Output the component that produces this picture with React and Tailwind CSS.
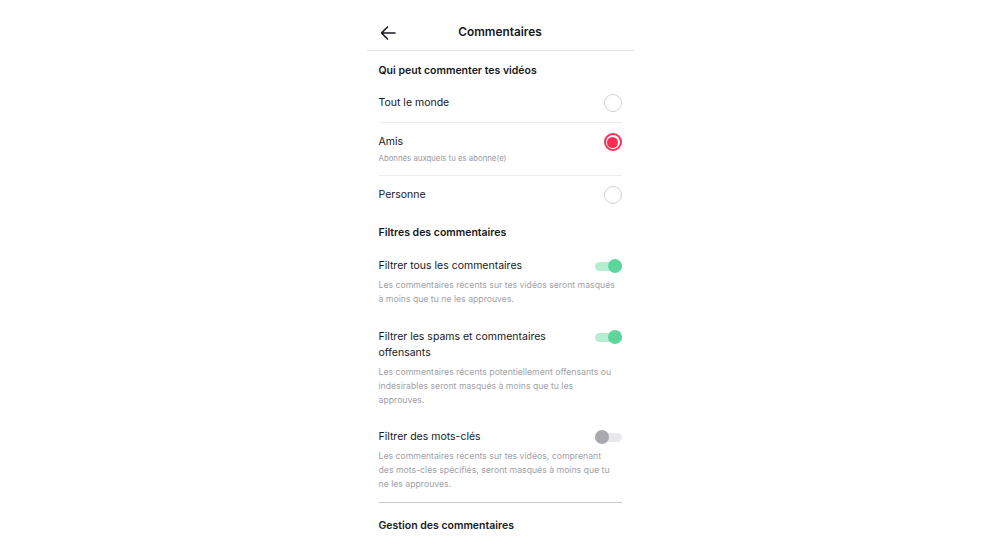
const Radio = ({ checked }) =>
    checked ? (
        <span className="flex h-[18px] w-[18px] shrink-0 items-center justify-center rounded-full border-2 border-[#fe2c55] bg-white">
            <span className="h-[11px] w-[11px] rounded-full bg-[#fe2c55]" />
        </span>
    ) : (
        <span className="h-[18px] w-[18px] shrink-0 rounded-full border border-[#d3d3d6] bg-white" />
    );

const Toggle = ({ on }) => (
    <span className="relative mt-[1px] flex h-[14px] w-[27px] shrink-0 items-center">
        <span className={on ? "h-[9px] w-full rounded-full bg-[#b6edd1]" : "h-[9px] w-full rounded-full bg-[#e8e8ea]"} />
        <span
            className={
                on
                    ? "absolute right-0 top-0 h-[14px] w-[14px] rounded-full bg-[#5ed69b]"
                    : "absolute left-0 top-0 h-[14px] w-[14px] rounded-full bg-[#a9a9ae]"
            }
        />
    </span>
);

const filters = [
    {
        title: ["Filtrer tous les commentaires"],
        desc: ["Les commentaires récents sur tes vidéos seront masqués", "à moins que tu ne les approuves."],
        on: true,
        gap: "mb-[23px]",
    },
    {
        title: ["Filtrer les spams et commentaires", "offensants"],
        desc: [
            "Les commentaires récents potentiellement offensants ou",
            "indésirables seront masqués à moins que tu les",
            "approuves.",
        ],
        on: true,
        gap: "mb-[22px]",
    },
    {
        title: ["Filtrer des mots-clés"],
        desc: [
            "Les commentaires récents sur tes vidéos, comprenant",
            "des mots-clés spécifiés, seront masqués à moins que tu",
            "ne les approuves.",
        ],
        on: false,
        gap: "",
    },
];

export default function App() {
    return (
        <div className="min-h-[560px] w-full bg-white font-['Inter',sans-serif] text-[#161823]">
            <div className="mx-auto w-[267px]">
                {/* header */}
                <div className="relative flex h-[51px] items-center border-b border-[#e3e3e5] pt-[13px]">
                    <svg className="absolute left-[13px] top-[26px]" width="16" height="14" viewBox="0 0 16 14" fill="none">
                        <path d="M15 7H1.5M7.5 1L1.5 7l6 6" stroke="#161823" strokeWidth="1.6" strokeLinecap="round" strokeLinejoin="round" />
                    </svg>
                    <h1 className="w-full text-center text-[11.8px] font-semibold leading-[16px]">Commentaires</h1>
                </div>

                <div className="pl-[12px] pr-[12px]">
                    <div className="flex h-[39px] items-center pt-[1px] text-[10.5px] font-semibold">Qui peut commenter tes vidéos</div>

                    <div className="border-b border-[#ececee] pb-[6px]">
                        <div className="flex h-[26px] items-center justify-between">
                            <span className="text-[10.5px]">Tout le monde</span>
                            <Radio />
                        </div>
                    </div>

                    <div className="flex items-start justify-between border-b border-[#ececee] pb-[11px] pt-[12px]">
                        <div>
                            <div className="text-[10.5px] leading-[14px]">Amis</div>
                            <div className="mt-[3px] text-[7.8px] leading-[12px] text-[#9a9a9f]">Abonnés auxquels tu es abonné(e)</div>
                        </div>
                        <span className="mt-[-2px]">
                            <Radio checked />
                        </span>
                    </div>

                    <div className="flex h-[37px] items-center justify-between pt-[1px]">
                        <span className="text-[10.5px]">Personne</span>
                        <Radio />
                    </div>

                    <div className="pt-[13px] text-[10.5px] font-semibold leading-[14px]">Filtres des commentaires</div>

                    <div className="flex flex-col pt-[18px]">
                        {filters.map((f, i) => (
                            <div key={i} className={f.gap}>
                                <div className="flex items-start justify-between">
                                    <div className="text-[10.5px] leading-[16px]">
                                        {f.title.map((t, j) => (
                                            <div key={j}>{t}</div>
                                        ))}
                                    </div>
                                    <Toggle on={f.on} />
                                </div>
                                <div className="mt-[4px] text-[8.7px] leading-[14px] text-[#a1a1a6]">
                                    {f.desc.map((d, j) => (
                                        <div key={j} className="whitespace-nowrap">{d}</div>
                                    ))}
                                </div>
                            </div>
                        ))}
                    </div>

                    <div className="mt-[11px] border-t border-[#c9c9cc]" />
                    <div className="pt-[15px] text-[10.5px] font-semibold leading-[16px]">Gestion des commentaires</div>
                </div>
            </div>
        </div>
    );
}
